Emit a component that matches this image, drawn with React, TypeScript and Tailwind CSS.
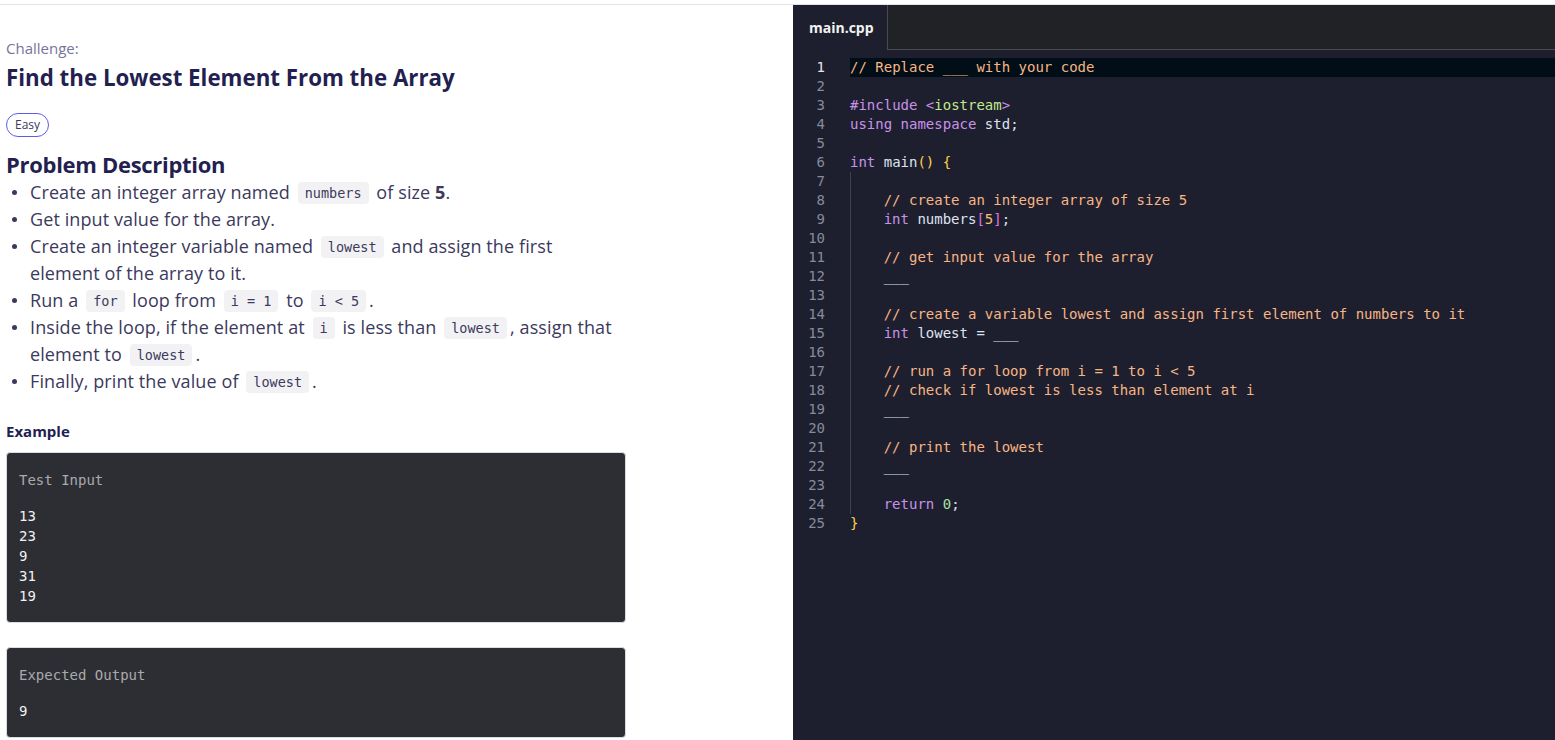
import React from 'react';

type Tok = [string, string];

// colours for the code editor
const COM = 'text-[#f7b585]';
const KW = 'text-[#c792ea]';
const STR = 'text-[#c3e88d]';
const TXT = 'text-[#dde3ee]';
const YEL = 'text-[#ffd24a]';
const PINK = 'text-[#e070e0]';
const NUM = 'text-[#f5c27a]';
const ZERO = 'text-[#a8e0a8]';

const CODE: { indent: boolean; toks: Tok[] }[] = [
  { indent: false, toks: [['// Replace ___ with your code', COM]] },
  { indent: false, toks: [] },
  { indent: false, toks: [['#include ', KW], ['<', KW], ['iostream', STR], ['>', KW]] },
  { indent: false, toks: [['using namespace ', KW], ['std;', TXT]] },
  { indent: false, toks: [] },
  { indent: false, toks: [['int ', KW], ['main', TXT], ['()', YEL], [' ', TXT], ['{', YEL]] },
  { indent: true, toks: [] },
  { indent: true, toks: [['// create an integer array of size 5', COM]] },
  { indent: true, toks: [['int ', KW], ['numbers', TXT], ['[', PINK], ['5', NUM], [']', PINK], [';', TXT]] },
  { indent: true, toks: [] },
  { indent: true, toks: [['// get input value for the array', COM]] },
  { indent: true, toks: [['___', TXT]] },
  { indent: true, toks: [] },
  { indent: true, toks: [['// create a variable lowest and assign first element of numbers to it', COM]] },
  { indent: true, toks: [['int ', KW], ['lowest = ___', TXT]] },
  { indent: true, toks: [] },
  { indent: true, toks: [['// run a for loop from i = 1 to i < 5', COM]] },
  { indent: true, toks: [['// check if lowest is less than element at i', COM]] },
  { indent: true, toks: [['___', TXT]] },
  { indent: true, toks: [] },
  { indent: true, toks: [['// print the lowest', COM]] },
  { indent: true, toks: [['___', TXT]] },
  { indent: true, toks: [] },
  { indent: true, toks: [['return ', KW], ['0', ZERO], [';', TXT]] },
  { indent: false, toks: [['}', YEL]] },
];

function Code({ children }: { children: React.ReactNode }) {
  return (
    <code className="mx-[3px] inline-block rounded-[4px] bg-[#f2f2f4] px-[7px] font-['DejaVu_Sans_Mono',monospace] text-[13.5px] leading-[22px] tracking-normal text-[#3b3a5c] align-[1px]">
      {children}
    </code>
  );
}

function Bullet({ children }: { children: React.ReactNode }) {
  return (
    <li className="flex">
      <span className="flex h-[27px] w-[24px] shrink-0 items-center pl-[6px]">
        <span className="h-[5px] w-[5px] rounded-full bg-[#3b3a5c]" />
      </span>
      <span className="whitespace-nowrap tracking-[0.1px]">{children}</span>
    </li>
  );
}

function ExampleBox({ label, lines }: { label: string; lines: string[] }) {
  return (
    <div className="rounded-[4px] border border-[#d9dce2] bg-[#2d2e33] px-[12px] pt-[17px] pb-[16px] font-['DejaVu_Sans_Mono',monospace] text-[14px] leading-[20px]">
      <div className="text-[#a9a9ae]">{label}</div>
      <div className="mt-[16px] text-[#f2f2f2]">
        {lines.map((l, i) => (
          <div key={i}>{l}</div>
        ))}
      </div>
    </div>
  );
}

export default function App() {
  return (
    <div className="h-[740px] w-[1555px] overflow-hidden bg-white">
      <div className="h-[4px]" />
      <div className="flex h-[736px] border-t border-[#dfe3ea]">
        {/* problem statement */}
        <div className="w-[793px] shrink-0 bg-white pl-[6px] pt-[33px] font-['Open_Sans',sans-serif]">
          <div className="text-[15px] leading-[20px] text-[#77739a]">Challenge:</div>
          <h1 className="mt-[5px] text-[22.3px] font-bold leading-[30px] text-[#231f50]">
            Find the Lowest Element From the Array
          </h1>
          <div className="mt-[20px] inline-flex h-[24px] items-center rounded-full border border-[#5b5bf0] px-[8px] text-[12px] text-[#3b3a5c]">
            Easy
          </div>
          <h2 className="mt-[12px] text-[22px] font-bold leading-[30px] tracking-[-0.3px] text-[#231f50]">Problem Description</h2>
          <ul className="text-[18px] leading-[27px] text-[#3b3a5c]">
            <Bullet>
              Create an integer array named <Code>numbers</Code> of size <b>5</b>.
            </Bullet>
            <Bullet>Get input value for the array.</Bullet>
            <Bullet>
              Create an integer variable named <Code>lowest</Code> and assign the first
              <br />
              element of the array to it.
            </Bullet>
            <Bullet>
              Run a <Code>for</Code> loop from <Code>i = 1</Code> to <Code>i &lt; 5</Code>.
            </Bullet>
            <Bullet>
              Inside the loop, if the element at <Code>i</Code> is less than <Code>lowest</Code>, assign that
              <br />
              element to <Code>lowest</Code>.
            </Bullet>
            <Bullet>
              Finally, print the value of <Code>lowest</Code>.
            </Bullet>
          </ul>
          <div className="mt-[26px] text-[15px] font-bold leading-[20px] text-[#231f50]">Example</div>
          <div className="mt-[11px] flex w-[620px] flex-col gap-[24px]">
            <ExampleBox label="Test Input" lines={['13', '23', '9', '31', '19']} />
            <ExampleBox label="Expected Output" lines={['9']} />
          </div>
        </div>

        {/* code editor */}
        <div className="flex flex-1 flex-col bg-[#1e1f2e]">
          <div className="flex h-[45px] bg-[#212226]">
            <div className="flex w-[95px] items-center border-r border-[#4a4b4f] bg-[#1e1f2e] pl-[16px] font-['Open_Sans',sans-serif] text-[14px] font-bold text-[#f2f2f2]">
              main.cpp
            </div>
            <div className="flex-1 border-b border-[#4a4b4f]" />
          </div>
          <div className="pt-[8px] font-['DejaVu_Sans_Mono',monospace] text-[14px] leading-[19px]">
            {CODE.map((line, i) => (
              <div key={i} className="flex h-[19px]">
                <div
                  className={`w-[33px] shrink-0 pr-[1px] text-right ${i === 0 ? 'text-[#e6e6e6]' : 'text-[#858b9c]'}`}
                >
                  {i + 1}
                </div>
                <div
                  className={`ml-[24px] flex flex-1 whitespace-pre ${i === 0 ? 'bg-[#010e17]' : ''}`}
                >
                  {line.indent && (
                    <span className="inline-block h-[19px] w-[33.7px] shrink-0 border-l border-[#3d4050]" />
                  )}
                  {line.toks.map(([t, c], j) => (
                    <span key={j} className={c}>
                      {t}
                    </span>
                  ))}
                </div>
              </div>
            ))}
          </div>
        </div>
      </div>
    </div>
  );
}
